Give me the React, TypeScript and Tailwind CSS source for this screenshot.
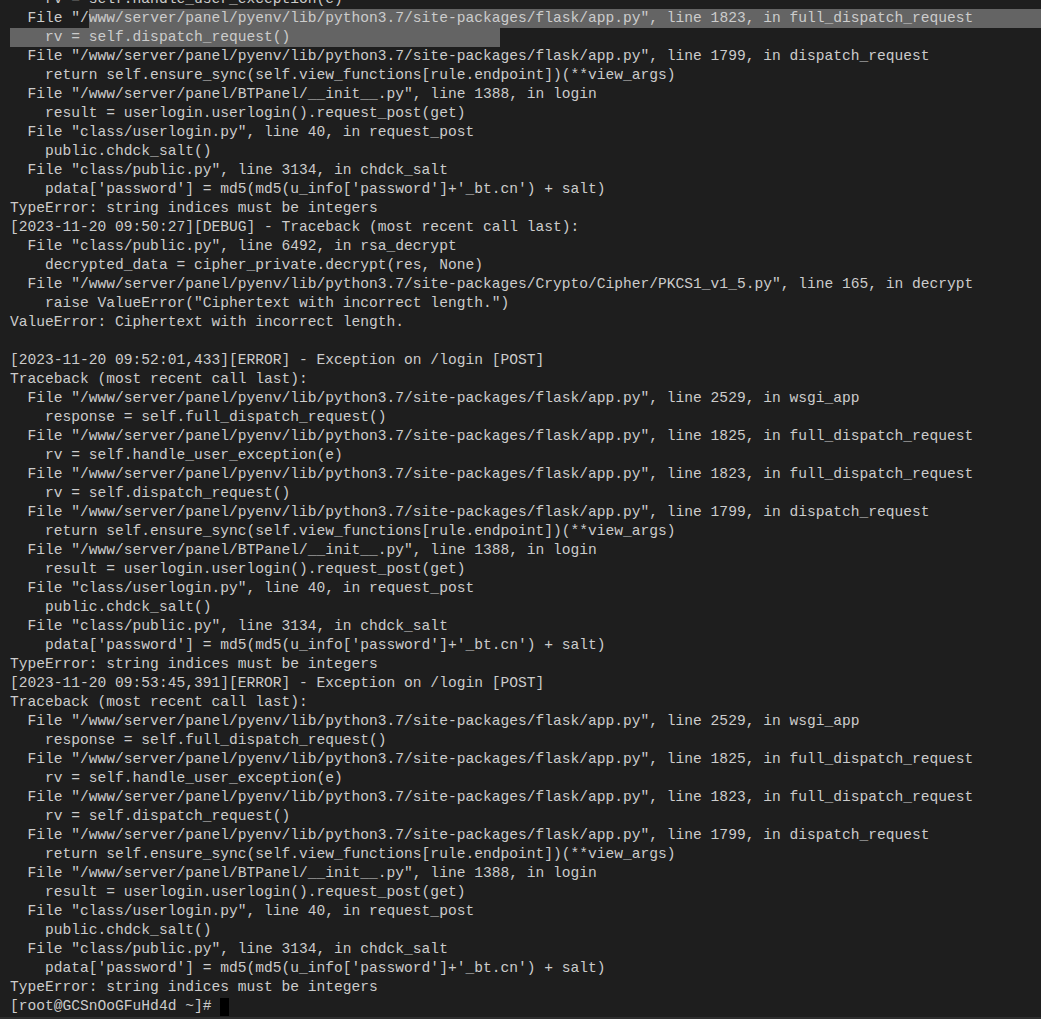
const PY = '"/www/server/panel/pyenv/lib/python3.7/site-packages';

const traceBody = [
  `  File ${PY}/flask/app.py", line 2529, in wsgi_app`,
  '    response = self.full_dispatch_request()',
  `  File ${PY}/flask/app.py", line 1825, in full_dispatch_request`,
  '    rv = self.handle_user_exception(e)',
  `  File ${PY}/flask/app.py", line 1823, in full_dispatch_request`,
  '    rv = self.dispatch_request()',
  `  File ${PY}/flask/app.py", line 1799, in dispatch_request`,
  '    return self.ensure_sync(self.view_functions[rule.endpoint])(**view_args)',
  '  File "/www/server/panel/BTPanel/__init__.py", line 1388, in login',
  '    result = userlogin.userlogin().request_post(get)',
  '  File "class/userlogin.py", line 40, in request_post',
  '    public.chdck_salt()',
  '  File "class/public.py", line 3134, in chdck_salt',
  "    pdata['password'] = md5(md5(u_info['password']+'_bt.cn') + salt)",
  'TypeError: string indices must be integers',
];

const afterSelection = [
  `  File ${PY}/flask/app.py", line 1799, in dispatch_request`,
  '    return self.ensure_sync(self.view_functions[rule.endpoint])(**view_args)',
  '  File "/www/server/panel/BTPanel/__init__.py", line 1388, in login',
  '    result = userlogin.userlogin().request_post(get)',
  '  File "class/userlogin.py", line 40, in request_post',
  '    public.chdck_salt()',
  '  File "class/public.py", line 3134, in chdck_salt',
  "    pdata['password'] = md5(md5(u_info['password']+'_bt.cn') + salt)",
  'TypeError: string indices must be integers',
  '[2023-11-20 09:50:27][DEBUG] - Traceback (most recent call last):',
  '  File "class/public.py", line 6492, in rsa_decrypt',
  '    decrypted_data = cipher_private.decrypt(res, None)',
  `  File ${PY}/Crypto/Cipher/PKCS1_v1_5.py", line 165, in decrypt`,
  '    raise ValueError("Ciphertext with incorrect length.")',
  'ValueError: Ciphertext with incorrect length.',
  '',
  '[2023-11-20 09:52:01,433][ERROR] - Exception on /login [POST]',
  'Traceback (most recent call last):',
  ...traceBody,
  '[2023-11-20 09:53:45,391][ERROR] - Exception on /login [POST]',
  'Traceback (most recent call last):',
  ...traceBody,
];

function Line({ text }: { text: string }) {
  return <div className="h-[19px]">{text || ' '}</div>;
}

export default function App() {
  return (
    <div className="w-[1041px] h-[1019px] overflow-hidden bg-[#1e1e1e] border-b-2 border-[#2e2e2e]">
      <div
        className="-mt-[10px] pl-[10px] text-[14.6px] leading-[19px] text-[#cccccc] whitespace-pre"
        style={{ fontFamily: '"Liberation Mono", "DejaVu Sans Mono", monospace' }}
      >
        <Line text="    rv = self.handle_user_exception(e)" />

        {/* selected text */}
        <div className="h-[19px] flex">
          <span>{'  File "/'}</span>
          <span className="flex-1 bg-[#646464]">
            {'www/server/panel/pyenv/lib/python3.7/site-packages/flask/app.py", line 1823, in full_dispatch_request'}
          </span>
        </div>
        <div className="h-[19px]">
          <span className="inline-block w-[56ch] bg-[#646464]">{'    rv = self.dispatch_request()'}</span>
        </div>

        {afterSelection.map((t, i) => (
          <Line key={i} text={t} />
        ))}

        <div className="h-[19px] flex items-center">
          <span>{'[root@GCSnOoGFuHd4d ~]# '}</span>
          <span className="inline-block w-[9px] h-[18px] bg-black" />
        </div>
      </div>
    </div>
  );
}
